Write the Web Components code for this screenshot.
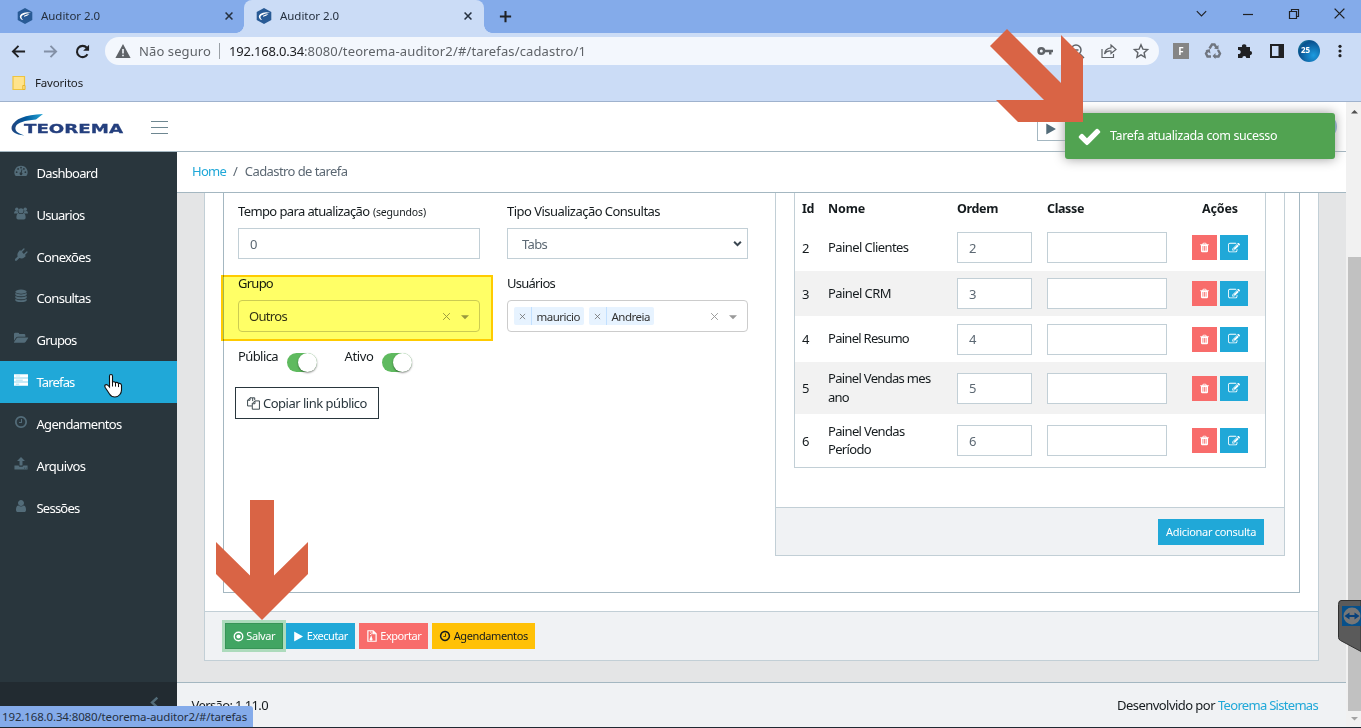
<!DOCTYPE html>
<html lang="pt-BR">
<head>
<meta charset="utf-8">
<title>Auditor 2.0</title>
<style>
  html, body { margin: 0; height: 100%; overflow: hidden; }
  body {
    font: 13px/20px "Noto Sans", "Open Sans", sans-serif;
    color: #151b1e;
    --line: #a4b7c1;
    --line-soft: #c2cfd6;
    --blue: #20a8d8;
    --red: #f86c6b;
    --bar: #f0f2f4;
  }
</style>
</head>
<body>
<auditor-screen></auditor-screen>

<script>
// 1792-unit glyphs are drawn on the icon font grid, the rest on a 16px grid
const ICONS = {
  trash: [1792, '<path d="M704 1376v-704q0-14-9-23t-23-9h-64q-14 0-23 9t-9 23v704q0 14 9 23t23 9h64q14 0 23-9t9-23zm256 0v-704q0-14-9-23t-23-9h-64q-14 0-23 9t-9 23v704q0 14 9 23t23 9h64q14 0 23-9t9-23zm256 0v-704q0-14-9-23t-23-9h-64q-14 0-23 9t-9 23v704q0 14 9 23t23 9h64q14 0 23-9t9-23zm-544-992h448l-48-117q-7-9-17-11h-317q-10 2-17 11zm928 32v64q0 14-9 23t-23 9h-96v948q0 83-47 143.500t-113 60.500h-832q-66 0-113-58.500t-47-141.500v-952h-96q-14 0-23-9t-9-23v-64q0-14 9-23t23-9h309l70-167q15-37 54-63t79-26h320q40 0 79 26t54 63l70 167h309q14 0 23 9t9 23z"/>'],
  edit: [1792, '<path d="M888 1184l116-116-152-152-116 116v56h96v96h56zm440-720q-16-16-33 1l-350 350q-17 17-1 33t33-1l350-350q17-17 1-33zm80 594v190q0 119-84.500 203.500t-203.500 84.500h-832q-119 0-203.500-84.500t-84.500-203.500v-832q0-119 84.500-203.500t203.500-84.500h832q63 0 117 25 15 7 18 23 3 17-9 29l-49 49q-14 14-32 8-23-6-45-6h-832q-66 0-113 47t-47 113v832q0 66 47 113t113 47h832q66 0 113-47t47-113v-126q0-13 9-22l64-64q15-15 35-7t20 29zm-96-738l288 288-672 672h-288v-288zm444 132l-92 92-288-288 92-92q28-28 68-28t68 28l152 152q28 28 28 68t-28 68z"/>'],
  clock: [1792, '<path d="M1024 544v448q0 14-9 23t-23 9h-320q-14 0-23-9t-9-23v-64q0-14 9-23t23-9h224v-352q0-14 9-23t23-9h64q14 0 23 9t9 23zm416 352q0-148-73-273t-198-198-273-73-273 73-198 198-73 273 73 273 198 198 273 73 273-73 198-198 73-273zm224 0q0 209-103 385.500t-279.500 279.500-385.500 103-385.500-103-279.500-279.500-103-385.500 103-385.500 279.500-279.500 385.500-103 385.500 103 279.500 279.500 103 385.500z"/>'],
  check: [1792, '<path d="M1671 566q0 40-28 68l-724 724-136 136q-28 28-68 28t-68-28l-136-136-362-362q-28-28-28-68t28-68l136-136q28-28 68-28t68 28l294 295 656-657q28-28 68-28t68 28l136 136q28 28 28 68z"/>'],
  play: [1792, '<path d="M1576 927l-1328 738q-23 13-39.500 3t-16.500-36v-1472q0-26 16.500-36t39.500 3l1328 738q23 13 23 31t-23 31z"/>'],
  user: [1792, '<path d="M1536 1399q0 109-62.500 187t-150.500 78h-854q-88 0-150.500-78t-62.500-187q0-85 8.500-160.500t31.500-152 58.500-131 94-89 134.500-34.500q131 128 313 128t313-128q76 0 134.500 34.500t94 89 58.500 131 31.500 152 8.500 160.500zm-256-887q0 159-112.500 271.500t-271.500 112.500-271.500-112.500-112.500-271.500 112.500-271.500 271.500-112.500 271.500 112.500 112.500 271.500z"/>'],
  gauge: [16, '<path fill-rule="evenodd" d="M8 2a7.5 7.5 0 0 0-6.6 11.2q.3.5.9.5h11.4q.6 0 .9-.5A7.500 7.500 0 0 0 8 2zM3 8.400a1 1 0 1 1 0 2 1 1 0 0 1 0-2zm1.700-3.700a1 1 0 1 1 0 2 1 1 0 0 1 0-2zM8 3.200a1 1 0 1 1 0 2 1 1 0 0 1 0-2zm5 5.200a1 1 0 1 1 0 2 1 1 0 0 1 0-2zm-1.700-3.700a1 1 0 1 1 0 2 1 1 0 0 1 0-2zM8.700 6l.9.200-.8 3.400a1.600 1.600 0 1 1-1-.2z"/>'],
  users: [16, '<circle cx="3.200" cy="3.600" r="2"/><circle cx="12.800" cy="3.600" r="2"/><circle cx="8" cy="5.400" r="2.900"/><path d="M0 8.700Q0 6 1.500 5.700l2.900.2q.2 2 1.300 2.600H1.200Q0 8.700 0 8.700zM16 8.700Q16 6 14.500 5.700l-2.900.2q-.2 2-1.300 2.600h4.500zM2.700 13.400Q2.700 8.500 5.200 8.500q2.800 1.500 5.600 0 2.500 0 2.500 4.900 0 2-2 2H4.700q-2 0-2-2z"/>'],
  plug: [16, '<path d="M15.300 5.100L12.500 8l1 1-1.200 1.200Q9.500 13 6.100 11.500L3 14.500H1.200v-1.800l3-3Q3 6.300 5.700 3.600l1.200-1.200 1 1L10.800.6q.6-.5 1.100 0 .5.500 0 1.100L9.100 4.600l2.200 2.200 2.900-2.800q.6-.5 1.100 0 .5.500 0 1.100z"/>'],
  database: [16, '<ellipse cx="8" cy="3" rx="6.500" ry="2.300"/><path d="M1.500 4.700q6.500 3 13 0v1.600q0 2-6.500 2t-6.500-2zM1.500 8q6.500 3 13 0v1.600q0 2-6.500 2t-6.500-2zM1.500 11.300q6.500 3 13 0v1.600q0 2-6.500 2t-6.500-2z"/>'],
  folder: [16, '<path d="M0 3.500Q0 2 1.500 2h3Q6 2 6 3.500h5.500q1.500 0 1.500 1.500v1.500H4.500Q3 6.500 2 8L0 11zM4.300 7.500H16q.5.200.1.800l-2.900 4.200q-.6.900-1.600.9H.3q-.6-.1-.2-.8l2.900-4.200q.5-.9 1.300-.9z"/>'],
  server: [16, '<path d="M0 1.500h16v3.900H0zM0 6.100h16V10H0zM0 10.700h16v3.900H0z"/><path fill="#8fd3ec" d="M2 3h5v.8H2zM2 7.700h8v.8H2zM2 12.300h4v.8H2z"/>'],
  upload: [16, '<path d="M8 0l4.500 4.700H9.700v5H6.300v-5H3.500zM.5 9.700h4.800q.3 1.400 1.500 1.400h2.400q1.200 0 1.500-1.400h4.800v4.600H.5zm11 2.600v.9h1v-.9zm2 0v.9h1v-.9z"/>'],
  target: [16, '<circle cx="8" cy="8" r="6.200" fill="none" stroke="currentColor" stroke-width="2"/><circle cx="8" cy="8" r="3"/>'],
  file: [16, '<path d="M2.500 1h7l4 4v10h-11zM9.500 1v4h4" fill="none" stroke="currentColor" stroke-width="1.600"/><path d="M5.500 2h1.500v1.300H5.500zM7 3.700h1.500V5H7zM5.500 5.400H7v1.300H5.500zM7 7l1.500 4.500a2 2 0 1 1-3.500 0z"/>'],
  copy: [16, '<path d="M7 5V1H3.700L.7 4v7H6M3.700 1v3h-3M10 4.800h5.300V15H6.500V8l3.200-3.200M9.800 5v3.300H6.500M7 1h2.500v3" fill="none" stroke="currentColor" stroke-width="1.100"/>'],
  chevron: [16, '<path d="M11.500 2L5 8l6.500 6" fill="none" stroke="currentColor" stroke-width="3"/>'],
  back: [16, '<path d="M15 8H2M8 2L2 8l6 6" fill="none" stroke="currentColor" stroke-width="2"/>'],
  forward: [16, '<path d="M1 8h13M8 2l6 6-6 6" fill="none" stroke="currentColor" stroke-width="2"/>'],
  reload: [16, '<path d="M13.300 11A6 6 0 1 1 12.600 4" fill="none" stroke="currentColor" stroke-width="2.200"/><path d="M15 .8v6.300H8.700z"/>'],
  warning: [16, '<path fill-rule="evenodd" d="M8 1l7.600 14H.4zM7.200 6v4.500h1.600V6zm0 5.700v1.600h1.600v-1.600z"/>'],
  key: [16, '<path fill-rule="evenodd" d="M4.300 4a4 4 0 1 1 0 8 4 4 0 0 1 0-8zM4.300 6.500a1.500 1.500 0 1 0 0 3 1.500 1.500 0 0 0 0-3z"/><path d="M8 6.700h8v2.600h-1.500v2.200H12V9.300H8z"/>'],
  search: [16, '<circle cx="7" cy="7" r="5" fill="none" stroke="currentColor" stroke-width="1.500"/><path d="M4.500 7h5M11 11l4 4" stroke="currentColor" stroke-width="1.500"/>'],
  share: [16, '<path d="M1 6v8.500h11.500V11M10 2l5 4.500-5 4V8Q5.500 7.500 3.500 11 4 5.500 10 4.800z" fill="none" stroke="currentColor" stroke-width="1.200"/>'],
  star: [16, '<path d="M8 1.800l1.900 4.300 4.700.5-3.500 3.100 1 4.600L8 11.900l-4.100 2.400 1-4.600L1.400 6.600l4.700-.5z" fill="none" stroke="currentColor" stroke-width="1.400"/>'],
  recycle: [16, '<path d="M4.500 5.500L7 1.500h2.500l2 3.300M13 7l2 3.500-1.500 3H9M6 13.500H2.500L1 10.500l2-3.300" fill="none" stroke="currentColor" stroke-width="2.400"/><path d="M9 5.500l4.500 1V2zM10.500 10v6l-3-3zM.5 7.500L4.700 6l.8 4.500z"/>'],
  puzzle: [16, '<path d="M1 4h4a2.200 2.200 0 1 1 4.300 0H13v4a2.100 2.100 0 1 1 0 4.200V15H9.300a2 2 0 1 0-4 0H1v-4a2.100 2.100 0 1 0 0-4z"/>'],
  panel: [16, '<path fill-rule="evenodd" d="M1 1h14v14H1zM3 3v10h6.500V3z"/>'],
  dots: [16, '<circle cx="8" cy="2.700" r="1.800"/><circle cx="8" cy="8" r="1.800"/><circle cx="8" cy="13.300" r="1.800"/>'],
  cross: [16, '<path d="M2.500 2.500l11 11m0-11l-11 11" stroke="currentColor" stroke-width="2.500"/>'],
  thin: [16, '<path d="M2 2l12 12m0-12L2 14" stroke="currentColor" stroke-width="1.700"/>'],
  plus: [16, '<path d="M8 2v12M2 8h12" stroke="currentColor" stroke-width="2.200"/>'],
  down: [16, '<path d="M3 5.500l5 5 5-5" fill="none" stroke="currentColor" stroke-width="1.200"/>'],
  minus: [16, '<path d="M3 8.500h10" stroke="currentColor" stroke-width="1.200"/>'],
  restore: [16, '<path d="M3.500 5.500h7v7h-7zM5.500 5.500v-2h7v7h-2" fill="none" stroke="currentColor" stroke-width="1.200"/>'],
  select: [16, '<path d="M2 5l6 6 6-6" fill="none" stroke="currentColor" stroke-width="3.600"/>'],
  caret: [16, '<path d="M0 4.500h16l-8 8z"/>'],
  up: [16, '<path d="M0 12.500h16l-8-8z"/>'],
  bookmark: [16, '<path d="M2 1.500h11.500v13H2z" fill="#ffe38c" stroke="#eec440" stroke-width="1.200"/><path d="M11.800 10.500H14v4h-2.200z" fill="#ffe38c" stroke="#e8b62a"/>'],
  favicon: [16, '<path fill="#285a95" d="M8 0l7.300 4v8L8 16 .7 12V4z"/><path fill="#fff" d="M14 4.700Q8 3.300 4.300 6 1.500 8.500 4 11.200q1 .8 2.200.8-3-2.500-1-4.400Q8.500 5.200 14 4.700zM7 7.700q3-1.500 5.500-1.700-2 2-5.500 2.800z"/>'],
};

class BaseElement extends HTMLElement {
  connectedCallback() {
    if (this.shadowRoot) return;
    this.attachShadow({ mode: "open" });
    this.shadowRoot.innerHTML = this.render();
    this.ready();
  }

  ready() {}

  attr(name, fallback = "") {
    return this.getAttribute(name) ?? fallback;
  }
}

class UiIcon extends BaseElement {
  render() {
    const [box, body] = ICONS[this.attr("name")];
    const size = this.attr("size", "14");
    return `<style>
      :host { display: inline-block; flex: none; width: ${size}px; height: ${size}px; line-height: 0; }
      svg { display: block; width: 100%; height: 100%; fill: currentColor; overflow: visible; }
    </style><svg viewBox="0 0 ${box} ${box}" aria-hidden="true">${body}</svg>`;
  }
}

// One line of text, tracked so that it takes exactly `w` pixels
class UiText extends BaseElement {
  render() {
    return `<style>
      :host { display: inline-block; flex: none; white-space: nowrap; }
      span { display: inline-block; }
    </style><span><slot></slot></span>`;
  }

  ready() {
    const target = Number(this.attr("w", "0"));
    if (!target) return;
    const span = this.shadowRoot.querySelector("span");
    const gap = (target - span.getBoundingClientRect().width) / this.textContent.length;
    span.style.letterSpacing = gap.toFixed(3) + "px";
  }
}

class BrowserTab extends BaseElement {
  render() {
    return `<style>
      :host { display: flex; align-items: center; box-sizing: border-box; height: 33px; padding: 0 10px 0 17px; font-size: 11.500px; letter-spacing: -0.050px; color: #25303f; }
      :host([active]) { background: #cbdcf6; border-radius: 8px 8px 0 0; padding: 0 11px 0 12px; position: relative; }
      :host([active])::before, :host([active])::after {
        content: ""; position: absolute; bottom: 0; width: 8px; height: 8px;
      }
      :host([active])::before { left: -8px; background: radial-gradient(circle at 0 0, transparent 7.500px, #cbdcf6 8px); }
      :host([active])::after { right: -8px; background: radial-gradient(circle at 100% 0, transparent 7.500px, #cbdcf6 8px); }
      ui-text { margin: -2px auto 0 8px; }
      ui-icon { margin-top: -1px; }
    </style>
    <ui-icon name="favicon" size="16"></ui-icon><ui-text><slot></slot></ui-text><ui-icon name="cross" size="10"></ui-icon>`;
  }
}

class BrowserChrome extends BaseElement {
  render() {
    return `<style>
      :host { display: block; height: 102px; box-sizing: border-box; background: #cbdcf6; border-bottom: 1px solid #9fb2cd; color: #202124; }
      .tabs { display: grid; grid-template-columns: 244px 240px 43px 1fr 46px 46px 47px 28px; height: 33px; align-items: center; background: #84abea; }
      .tabs > ui-icon { justify-self: center; margin-top: -1px; }
      .tabs > .win { justify-self: start; margin-top: -6px; }
      .bar { display: flex; align-items: center; height: 36px; padding-left: 11px; }
      .bar > ui-icon { margin-right: 17px; }
      .url { display: flex; align-items: center; box-sizing: border-box; width: 1054px; height: 28px; padding: 0 10px; border-radius: 14px; background: #f3f7fd; color: #5f6368; font-size: 13px; margin-left: -2px; }
      .url i { width: 1px; height: 16px; background: #9aa0a6; margin: 0 9px 0 8px; }
      .acts { display: flex; gap: 16px; margin-left: auto; }
      .ext { display: flex; align-items: center; gap: 16px; margin-left: 14px; }
      .ext .f { width: 16px; height: 16px; background: #858585; color: #fff; font: bold 10px/16px "Noto Sans", sans-serif; text-align: center; }
      .avatar { box-sizing: border-box; width: 22px; height: 22px; margin: 0 -3px; border-radius: 50%; background: radial-gradient(circle at 70% 70%, #1c9be0, #09518f 65%, #22a0a5); color: #fff; font: bold 8px/20px "Noto Sans", sans-serif; padding-left: 3px; }
      .favs { display: flex; align-items: center; gap: 8px; height: 28px; padding-left: 11px; font-size: 11.500px; }
    </style>
    <div class="tabs">
      <browser-tab>Auditor 2.0</browser-tab><browser-tab active>Auditor 2.0</browser-tab>
      <ui-icon name="plus" size="15"></ui-icon><span></span>
      <ui-icon class="win" name="down" size="15"></ui-icon><ui-icon class="win" name="minus" size="16"></ui-icon>
      <ui-icon class="win" name="restore" size="16"></ui-icon><ui-icon class="win" name="thin" size="13"></ui-icon>
    </div>
    <div class="bar">
      <ui-icon name="back" size="15"></ui-icon><ui-icon name="forward" size="15" style="color:#8390a6"></ui-icon><ui-icon name="reload" size="15"></ui-icon>
      <div class="url">
        <ui-icon name="warning" size="16" style="margin-right:8px"></ui-icon><ui-text w="72">Não seguro</ui-text><i></i>
        <ui-text w="75" style="color:#202124">192.168.0.34</ui-text><ui-text w="282">:8080/teorema-auditor2/#/tarefas/cadastro/1</ui-text>
        <div class="acts"><ui-icon name="key" size="16"></ui-icon><ui-icon name="search" size="16"></ui-icon><ui-icon name="share" size="16"></ui-icon><ui-icon name="star" size="16"></ui-icon></div>
      </div>
      <div class="ext">
        <span class="f">F</span><ui-icon name="recycle" size="16" style="color:#707680"></ui-icon><ui-icon name="puzzle" size="16"></ui-icon>
        <ui-icon name="panel" size="16"></ui-icon><span class="avatar">25</span><ui-icon name="dots" size="14"></ui-icon>
      </div>
    </div>
    <div class="favs"><ui-icon name="bookmark" size="16"></ui-icon><ui-text w="48">Favoritos</ui-text></div>`;
  }
}

class AppHeader extends BaseElement {
  render() {
    return `<style>
      :host { display: flex; height: 50px; box-sizing: border-box; border-bottom: 1px solid var(--line); background: #fff; }
      .logo { width: 114px; height: 24px; margin: 12px 0 0 11px; overflow: visible; }
      .burger { width: 17px; height: 11px; margin: 19px 0 0 25.500px; border: solid #6e8791; border-width: 1px 0; display: flex; align-items: center; }
      .burger i { flex: 1; height: 1px; background: #6e8791; }
      .run { box-sizing: border-box; width: 250px; height: 28px; margin: 11px 0 0 auto; padding: 6px 7px; border: 1px solid var(--line); color: #536c79; }
      .me { width: 25px; height: 25px; border-radius: 50%; background: #85aed6; margin: 12px 9px 0 25px; }
    </style>
    <svg class="logo" viewBox="0 0 114 24">
      <defs><linearGradient id="g"><stop offset="0" stop-color="#23447f"/><stop offset=".45" stop-color="#00599d"/><stop offset="1" stop-color="#24a5d5"/></linearGradient></defs>
      <path fill="url(#g)" d="M32 0Q5 1 .7 12.500Q-1 20 13.500 21.500Q2 18 5 12Q7.500 7 25 5.500Z"/>
      <text x="13" y="19" font-family="DejaVu Sans" font-weight="700" font-size="13" fill="#243f7e" stroke="#243f7e" stroke-width=".3" textLength="99" lengthAdjust="spacingAndGlyphs">TEOREMA</text>
    </svg>
    <div class="burger"><i></i></div>
    <div class="run"><ui-icon name="play" size="12"></ui-icon></div><div class="me"></div>`;
  }
}

class NavItem extends BaseElement {
  render() {
    return `<style>
      :host { display: flex; align-items: center; height: 41.850px; padding-left: 14px; color: #fff; }
      :host([active]) { background: var(--blue); }
      ui-icon { color: #536c79; margin: -4px 8.500px 0 0; }
      :host([active]) ui-icon { color: #fff; }
    </style>
    <ui-icon name="${this.attr("icon")}" size="14"></ui-icon><ui-text w="${this.attr("w")}">${this.attr("label")}</ui-text>`;
  }
}

class AppSidebar extends BaseElement {
  render() {
    const items = [
      ["gauge", "Dashboard", 61], ["users", "Usuarios", 48], ["plug", "Conexões", 54],
      ["database", "Consultas", 54], ["folder", "Grupos", 40], ["server", "Tarefas", 38],
      ["clock", "Agendamentos", 85], ["upload", "Arquivos", 49], ["user", "Sessões", 43],
    ];
    return `<style>
      :host { display: flex; flex-direction: column; background: #29363d; }
      footer { margin-top: auto; height: 45px; background: #222b31; display: flex; justify-content: flex-end; align-items: center; padding-right: 16px; color: #536c79; }
      footer ui-icon { margin-top: -4px; }
    </style>
    ${items.map(([icon, label, w]) => `<nav-item icon="${icon}" label="${label}" w="${w}" ${label === "Tarefas" ? "active" : ""}></nav-item>`).join("")}
    <footer><ui-icon name="chevron" size="13"></ui-icon></footer>`;
  }
}

class UiButton extends BaseElement {
  render() {
    return `<style>
      :host { display: inline-flex; align-items: center; justify-content: center; box-sizing: border-box; height: 26px; font-size: 11px; color: #fff; background: var(--blue); gap: 2.500px; }
      :host([kind="danger"]) { background: var(--red); }
      :host([kind="warning"]) { background: #ffc107; color: #151b1e; }
      :host([kind="success"]) { background: #41a563; border: 1px solid #379457; box-shadow: 0 0 0 3px #addbbc; }
    </style><slot></slot>`;
  }
}

class UiInput extends BaseElement {
  render() {
    return `<style>
      :host { display: flex; align-items: center; box-sizing: border-box; height: 31px; padding: 0 11px; border: 1px solid var(--line-soft); background: #fff; color: #5c6873; }
    </style><slot></slot>`;
  }
}

class TagSelect extends BaseElement {
  render() {
    return `<style>
      :host { display: flex; align-items: center; box-sizing: border-box; height: 32px; padding: 0 10px; border: 1px solid #ccc; border-radius: 4px; background: #fff; color: #333; }
      div { display: flex; gap: 5px; margin-right: auto; }
      ui-icon { color: #999; }
    </style>
    <div><slot></slot></div>
    <ui-icon name="thin" size="9" style="margin-right:10px"></ui-icon><ui-icon name="caret" size="8" style="margin-top:2px"></ui-icon>`;
  }
}

class UiTag extends BaseElement {
  render() {
    return `<style>
      :host { display: flex; height: 18px; border-radius: 2px; background: #e7f3ff; font-size: 11.500px; line-height: 19px; color: #333; }
      i { width: 16.500px; border-right: 1px solid #c2e0ff; display: flex; align-items: center; justify-content: center; color: #666; }
      ui-text { padding: 0 4px 0 5px; }
    </style><i><ui-icon name="thin" size="7"></ui-icon></i><ui-text w="${this.attr("w")}">${this.attr("label")}</ui-text>`;
  }
}

class UiSwitch extends BaseElement {
  render() {
    return `<style>
      :host { display: flex; justify-content: flex-end; width: 30px; height: 19px; border-radius: 10px; background: #5fba5f; }
      i { width: 19px; height: 19px; border-radius: 50%; background: #fff; box-shadow: 0 1px 2px rgba(0,0,0,.45); }
    </style><i></i>`;
  }
}

class TaskForm extends BaseElement {
  render() {
    return `<style>
      :host { display: grid; grid-template-columns: 242px 241px; column-gap: 27px; grid-template-rows: 35px 31px 41px 32px 55px 32px; align-content: start; }
      .label { padding-top: 8px; }
      small { font-size: 10.500px; }
      .toggles { grid-column: 1 / 3; display: flex; align-items: flex-start; padding-top: 14px; }
      .toggles ui-switch { margin: 6.500px 28px 0 8.500px; }
      .copy { box-sizing: border-box; width: 144px; margin-left: -3px; border: 1px solid #29363d; display: flex; align-items: center; justify-content: center; gap: 3px; color: #29363d; }
    </style>
    <div class="label"><ui-text w="131.500">Tempo para atualização</ui-text> <small><ui-text w="53">(segundos)</ui-text></small></div>
    <div class="label"><ui-text w="153">Tipo Visualização Consultas</ui-text></div>
    <ui-input>0</ui-input>
    <ui-input style="padding:0 5px 0 14px"><ui-text w="25" style="margin-right:auto">Tabs</ui-text><ui-icon name="select" size="9" style="color:#3a4650"></ui-icon></ui-input>
    <div class="label" style="padding-top:14px"><ui-text w="35">Grupo</ui-text></div>
    <div class="label" style="padding-top:14px"><ui-text w="48">Usuários</ui-text></div>
    <tag-select><ui-text w="38">Outros</ui-text></tag-select>
    <tag-select style="padding-left:6px"><ui-tag label="mauricio" w="43.500"></ui-tag><ui-tag label="Andreia" w="38.500"></ui-tag></tag-select>
    <div class="toggles"><ui-text w="40">Pública</ui-text><ui-switch></ui-switch><ui-text w="29">Ativo</ui-text><ui-switch></ui-switch></div>
    <div class="copy"><ui-icon name="copy" size="13"></ui-icon><ui-text w="104">Copiar link público</ui-text></div>`;
  }
}

class QueryTable extends BaseElement {
  render() {
    const rows = [
      [2, ["Painel Clientes", 80.500], [], 46], [3, ["Painel CRM", 63], [], 45], [4, ["Painel Resumo", 81], [], 46],
      [5, ["Painel Vendas mes", 102.500], ["ano", 21], 52], [6, ["Painel Vendas", 76.500], ["Período", 43], 53],
    ];
    const name = ([text, w]) => text ? `<ui-text w="${w}">${text}</ui-text>` : "";
    return `<style>
      :host { display: block; box-sizing: border-box; height: 275px; border: 1px solid var(--line-soft); border-top: 0; background: #fff; }
      .row { display: grid; grid-template-columns: 26px 129px 75px 135px 1fr; align-items: center; box-sizing: border-box; padding-left: 7px; }
      .row > :nth-child(4) { margin-left: 15px; }
      .head { height: 32px; font-weight: 700; font-size: 12.500px; }
      .head > :last-child { justify-self: center; margin-left: 8px; }
      .head + .row { padding-bottom: 1px; }
      .striped { background: #f2f2f2; }
      .name { display: flex; flex-direction: column; line-height: 18.500px; align-items: flex-start; margin-top: -1px; }
      .acts { display: flex; gap: 3px; padding-left: 25px; }
      .acts ui-button { width: 25px; height: 25px; }
      .acts ui-button + ui-button { width: 28px; }
    </style>
    <div class="row head"><ui-text w="12">Id</ui-text><ui-text w="37">Nome</ui-text><ui-text w="41">Ordem</ui-text><ui-text w="37">Classe</ui-text><ui-text w="36">Ações</ui-text></div>
    ${rows.map(([id, first, second, height], i) => `<div class="row ${i % 2 ? "striped" : ""}" style="height:${height}px">
      <span>${id}</span><div class="name">${name(first)}${name(second)}</div>
      <ui-input>${id}</ui-input><ui-input></ui-input>
      <div class="acts"><ui-button kind="danger"><ui-icon name="trash" size="11"></ui-icon></ui-button><ui-button><ui-icon name="edit" size="12"></ui-icon></ui-button></div>
    </div>`).join("")}`;
  }
}

class TaskPage extends BaseElement {
  render() {
    return `<style>
      :host { display: grid; grid-template-rows: 41px 489px 45px; background: #e4e5e6; }
      .crumbs { display: flex; align-items: center; padding: 0 0 2px 15px; box-sizing: border-box; border-bottom: 1px solid var(--line); background: #fff; color: #5c6873; }
      .crumbs a, .foot a { color: var(--blue); }
      .crumbs span { margin: 0 7px; }
      .card { box-sizing: border-box; width: 1115px; height: 468px; margin-left: 27px; border: 1px solid var(--line-soft); border-top: 0; background: #fff; display: flex; flex-direction: column; }
      .box { display: flex; justify-content: space-between; box-sizing: border-box; height: 400px; margin: 0 18px; padding: 0 14px; border: 1px solid var(--line); border-top: 0; }
      .panel { display: flex; flex-direction: column; box-sizing: border-box; width: 510px; height: 363px; border: 1px solid var(--line-soft); border-top: 0; }
      .panel query-table { margin: 0 18px; }
      .bar { display: flex; align-items: center; margin-top: auto; box-sizing: border-box; height: 49px; background: var(--bar); border-top: 1px solid var(--line-soft); }
      .panel .bar { justify-content: flex-end; height: 48px; padding: 1px 20px 0 0; }
      .foot { display: flex; justify-content: space-between; align-items: center; padding: 0 28px 0 14.500px; border-top: 1px solid var(--line); background: var(--bar); }
      .foot div { display: flex; gap: 3px; }
    </style>
    <div class="crumbs"><a><ui-text w="34">Home</ui-text></a><span>/</span><ui-text w="102.500">Cadastro de tarefa</ui-text></div>
    <div><div class="card">
      <div class="box">
        <task-form></task-form>
        <div class="panel"><query-table></query-table>
          <div class="bar"><ui-button style="width:106px"><ui-text w="90">Adicionar consulta</ui-text></ui-button></div>
        </div>
      </div>
      <div class="bar" style="padding-left:20px">
        <ui-button kind="success" style="width:58px;margin-right:3px"><ui-icon name="target" size="11"></ui-icon><ui-text w="29">Salvar</ui-text></ui-button>
        <ui-button style="width:69px;margin-right:4px"><ui-icon name="play" size="11"></ui-icon><ui-text w="41">Executar</ui-text></ui-button>
        <ui-button kind="danger" style="width:69px;margin-right:4px"><ui-icon name="file" size="12"></ui-icon><ui-text w="41">Exportar</ui-text></ui-button>
        <ui-button kind="warning" style="width:103px"><ui-icon name="clock" size="12"></ui-icon><ui-text w="74">Agendamentos</ui-text></ui-button>
      </div>
    </div></div>
    <div class="foot"><ui-text w="76.500">Versão: 1.11.0</ui-text><div><ui-text w="98">Desenvolvido por</ui-text><a><ui-text w="100">Teorema Sistemas</ui-text></a></div></div>`;
  }
}

class PageScrollbar extends BaseElement {
  render() {
    return `<style>
      :host { display: flex; flex-direction: column; box-sizing: border-box; width: 15px; padding: 6px 0 5px 2px; background: #f1f1f1; }
      ui-icon { margin-left: 3px; color: #505050; }
      i { flex: 1; margin: 142px 0 4px; background: #c1c1c1; }
    </style><ui-icon name="up" size="7"></ui-icon><i></i><ui-icon name="caret" size="7" style="color:#a3a3a3"></ui-icon>`;
  }
}

class ToastMessage extends BaseElement {
  render() {
    return `<style>
      :host { display: flex; align-items: center; box-sizing: border-box; width: 270px; height: 46px; padding-left: 12px; gap: 8px; border-radius: 3px; background: #51a351; color: #fff; box-shadow: 0 0 12px #999; font-size: 12.500px; letter-spacing: -0.370px; }
    </style><ui-icon name="check" size="25"></ui-icon><ui-text><slot></slot></ui-text>`;
  }
}

class AuditorScreen extends BaseElement {
  render() {
    return `<style>
      :host { display: grid; grid-template-rows: 102px 625px 1px; position: relative; width: 1361px; height: 728px; background: #202832; overflow: hidden; }
      .app { display: grid; grid-template-columns: 1fr 15px; }
      .main { display: grid; grid-template-rows: 50px 575px; }
      .cols { display: grid; grid-template-columns: 177px 1169px; }
      .over { position: absolute; }
      .mark { left: 221px; top: 275px; width: 272px; height: 66px; box-sizing: border-box; border: 2px solid #ffcb00; background: #ffff66; mix-blend-mode: multiply; }
      .status { left: 0; top: 706px; width: 253px; height: 21px; box-sizing: border-box; padding-left: 2px; border-top-right-radius: 3px; background: #84abea; color: #25303f; font-size: 11.500px; line-height: 21px; }
      .draw { left: 0; top: 0; width: 1361px; height: 728px; }
    </style>
    <browser-chrome></browser-chrome>
    <div class="app">
      <div class="main"><app-header></app-header><div class="cols"><app-sidebar></app-sidebar><task-page></task-page></div></div>
      <page-scrollbar></page-scrollbar>
    </div>
    <div class="over mark"></div>
    <toast-message class="over" style="left:1065px;top:113px">Tarefa atualizada com sucesso</toast-message>
    <div class="over status"><ui-text w="245">192.168.0.34:8080/teorema-auditor2/#/tarefas</ui-text></div>
    <svg class="over draw" viewBox="0 0 1361 728">
      <g fill="#d96445">
        <path d="M1007 29l54 54V35l22 22v65h-65l-22-22h48L990 46z"/>
        <path d="M250 500h24v75.500l34-33.500v32l-46 46-46-46v-32l34 33.500z"/>
      </g>
      <path d="M1361 600.500h-20q-2.500 0-2.500 4v33q0 2 2 3l20.500 11z" fill="#5a5a5a" stroke="#303030"/>
      <path d="M1342 606h19v20h-19z" fill="#07508a"/>
      <circle cx="1352" cy="616" r="8.500" fill="#777"/>
      <path d="M1344.500 616l5-3.500v2.500h5v-2.500l5 3.500-5 3.500V617h-5v2.500z" fill="#07407a"/>
      <path d="M109.500 376q0-1.500 1.500-1.500t1.500 1.500v6q2-.8 3 .6 2-.6 3 .8 2.500-.4 3 1.700v4.900q0 2.500-1.600 4.500-2 2.500-5 2.500-3.600 0-5.400-3l-4.300-6.500q-1-2 .4-2.700 1.500-.6 3 1.200l.9 1z" fill="#fff" stroke="#111" stroke-width="1.100"/>
      <path d="M112.500 382v4.500m3-3.900v4m3-3v3.500" stroke="#111"/>
    </svg>`;
  }
}

// Leaves first, so measured text is in place when the screen renders
customElements.define("ui-icon", UiIcon);
customElements.define("ui-text", UiText);
customElements.define("ui-button", UiButton);
customElements.define("ui-input", UiInput);
customElements.define("ui-tag", UiTag);
customElements.define("ui-switch", UiSwitch);
customElements.define("tag-select", TagSelect);
customElements.define("browser-tab", BrowserTab);
customElements.define("browser-chrome", BrowserChrome);
customElements.define("app-header", AppHeader);
customElements.define("nav-item", NavItem);
customElements.define("app-sidebar", AppSidebar);
customElements.define("task-form", TaskForm);
customElements.define("query-table", QueryTable);
customElements.define("task-page", TaskPage);
customElements.define("page-scrollbar", PageScrollbar);
customElements.define("toast-message", ToastMessage);
customElements.define("auditor-screen", AuditorScreen);
</script>
</body>
</html>
